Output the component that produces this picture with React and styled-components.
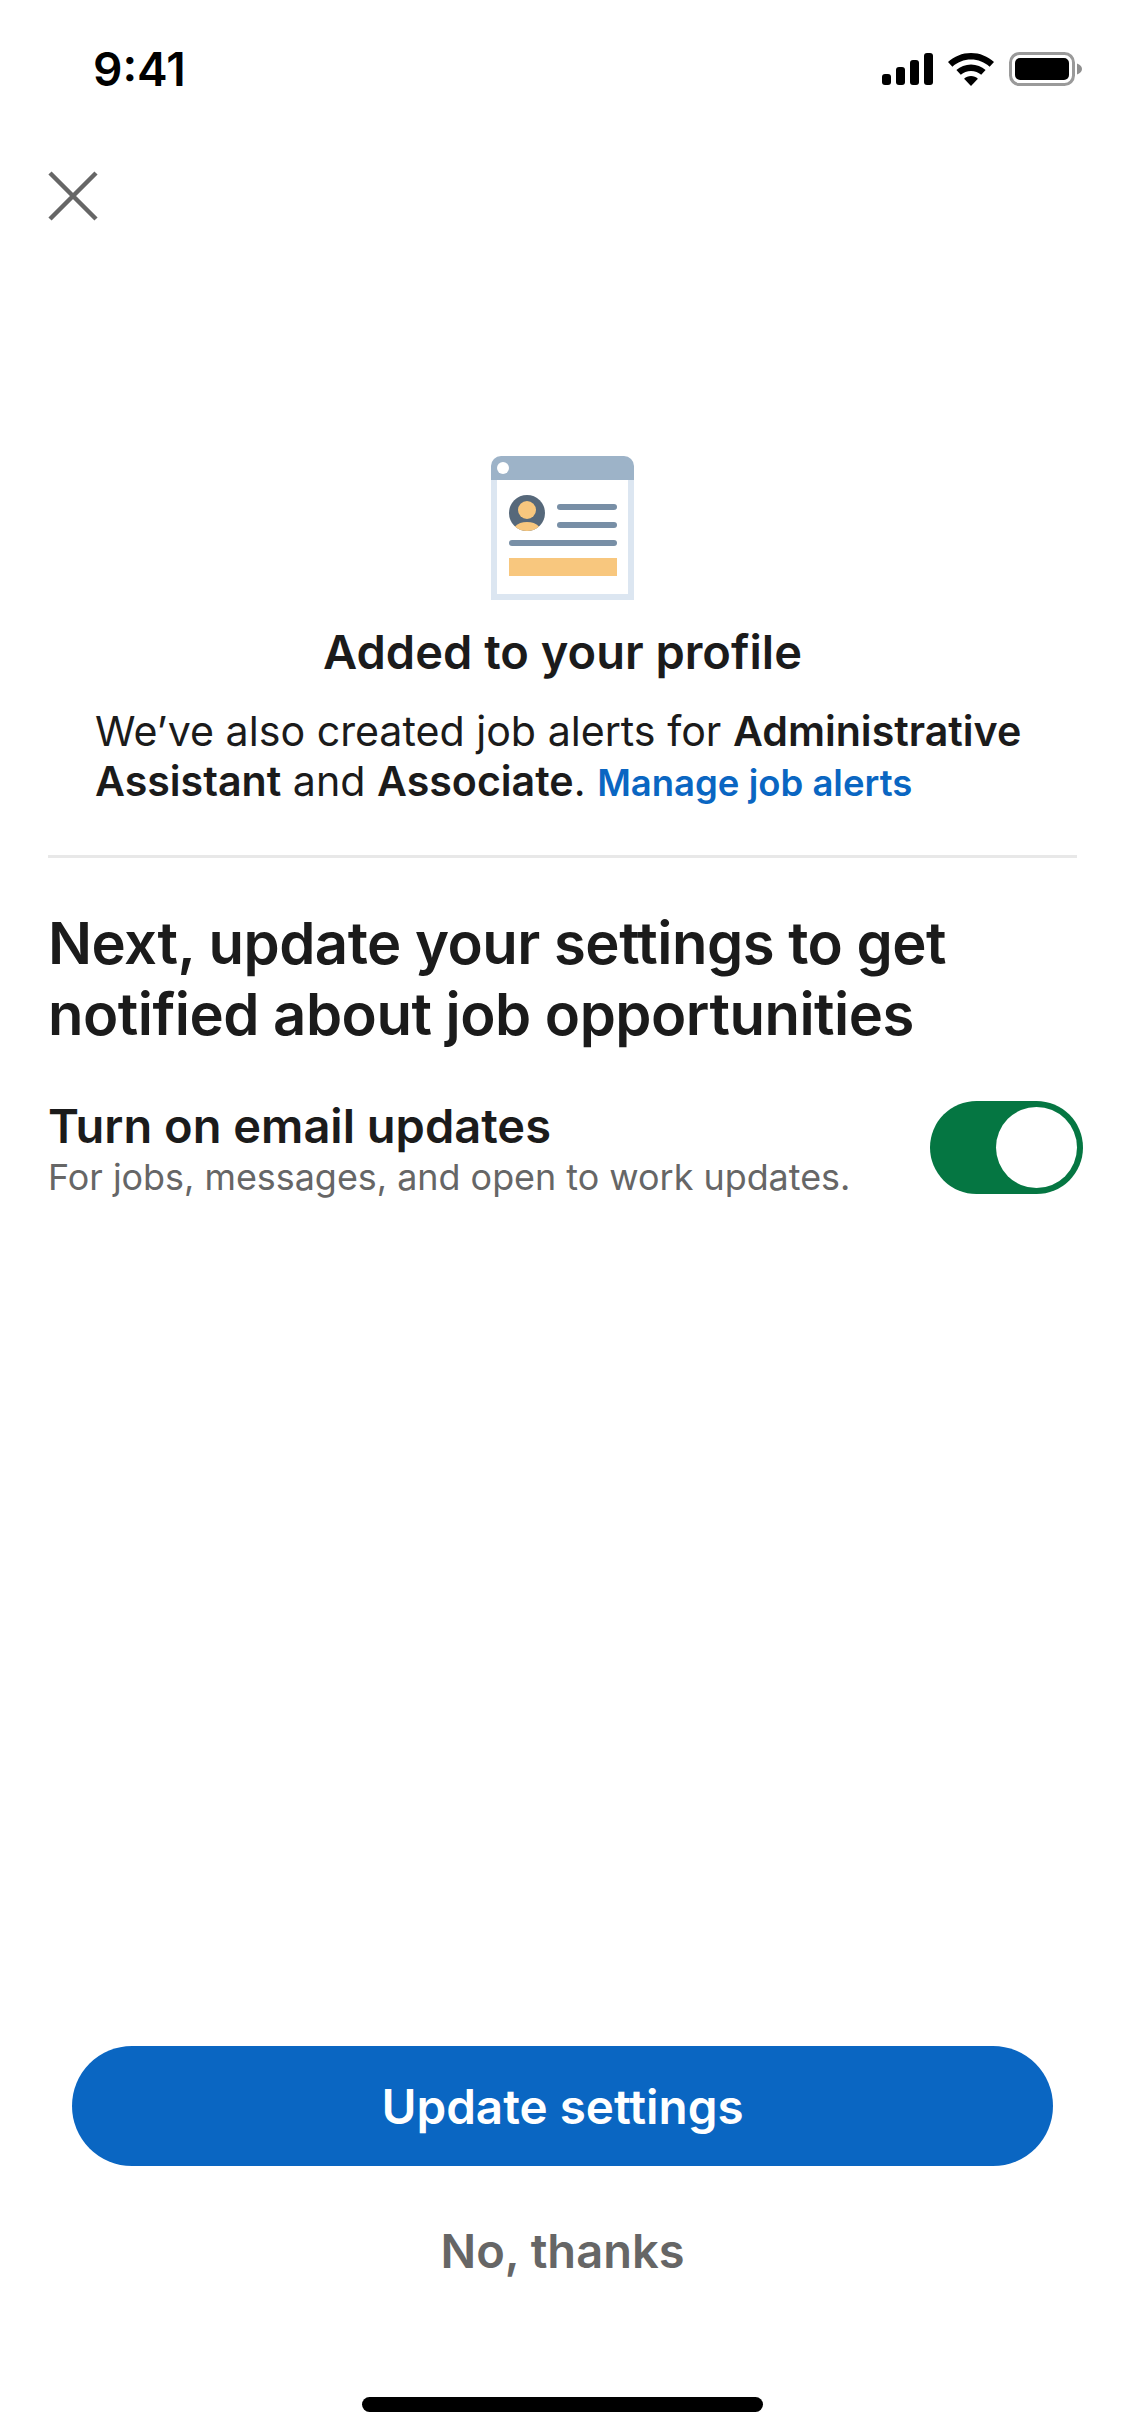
import React from "react";
import styled, {createGlobalStyle} from "styled-components";

const GlobalStyle = createGlobalStyle`
    html, body {
        margin: 0;
        padding: 0;
        background: #fff;
    }
    * {
        box-sizing: border-box;
    }
    body {
        font-family: Inter, "Liberation Sans", sans-serif;
    }
`;

const Page = styled.div`
    width: 1125px;
    height: 2436px;
    display: flex;
    flex-direction: column;
    background: #fff;
    color: #1b1b1b;
    overflow: hidden;
`;

const StatusBar = styled.div`
    height: 52px;
    margin-top: 43px;
    padding: 0 43px 0 93px;
    display: flex;
    align-items: center;
    justify-content: space-between;
`;

const Time = styled.span`
    font-size: 46px;
    font-weight: 600;
    line-height: 52px;
    color: #000;
`;

const StatusIcons = styled.div`
    display: flex;
    align-items: center;
    gap: 15px;
`;

const CloseButton = styled.button`
    width: 50px;
    height: 50px;
    margin: 76px 0 0 48px;
    padding: 0;
    border: 0;
    background: none;
    display: block;
`;

const IllustrationWrap = styled.div`
    margin-top: 235px;
    display: flex;
    justify-content: center;
`;

const ProfileTitle = styled.h2`
    margin: 22px 0 0;
    font-size: 47px;
    line-height: 60px;
    font-weight: 600;
    text-align: center;
`;

const Message = styled.p`
    margin: 24px 48px 0 95px;
    font-size: 41.15px;
    line-height: 50px;
    font-weight: 400;
`;

const Strong = styled.strong`
    font-weight: 600;
`;

const ManageLink = styled.a`
    color: #0a66c2;
    font-size: 36.5px;
    font-weight: 600;
`;

const Divider = styled.hr`
    height: 3px;
    margin: 47px 48px 0;
    border: 0;
    background: #e8e8e8;
`;

const Heading = styled.h1`
    margin: 50px 48px 0;
    font-size: 58px;
    line-height: 71px;
    font-weight: 600;
    letter-spacing: -0.5px;
`;

const SettingRow = styled.div`
    margin: 50px 42px 0 48px;
    display: flex;
    align-items: flex-start;
    justify-content: space-between;
`;

const SettingText = styled.div`
    display: flex;
    flex-direction: column;
`;

const SettingTitle = styled.span`
    font-size: 47px;
    line-height: 52px;
    font-weight: 600;
`;

const SettingHint = styled.span`
    font-size: 35.9px;
    line-height: 50px;
    color: #666;
`;

const Toggle = styled.div`
    width: 153px;
    height: 93px;
    margin-top: 1px;
    padding: 6px;
    border-radius: 47px;
    background: #057642;
    display: flex;
    justify-content: flex-end;
`;

const Knob = styled.div`
    width: 81px;
    height: 81px;
    border-radius: 50%;
    background: #fff;
`;

const Footer = styled.div`
    margin-top: auto;
    display: flex;
    flex-direction: column;
    align-items: center;
`;

const PrimaryButton = styled.button`
    width: 981px;
    height: 120px;
    border: 0;
    border-radius: 60px;
    background: #0a66c2;
    color: #fff;
    font-family: inherit;
    font-size: 47.6px;
    font-weight: 600;
`;

const SecondaryButton = styled.button`
    margin-top: 54px;
    padding: 0;
    height: 60px;
    border: 0;
    background: none;
    color: #666;
    font-family: inherit;
    font-size: 47px;
    font-weight: 600;
`;

const HomeBar = styled.div`
    width: 401px;
    height: 15px;
    margin: 117px 0 24px;
    border-radius: 8px;
    background: #000;
`;

function SignalIcon() {
    return (
        <svg width="51" height="32" viewBox="0 0 51 32">
            <rect x="0" y="21" width="9" height="11" rx="3" fill="#000"/>
            <rect x="14" y="14" width="9" height="18" rx="3" fill="#000"/>
            <rect x="28" y="7" width="9" height="25" rx="3" fill="#000"/>
            <rect x="42" y="0" width="9" height="32" rx="3" fill="#000"/>
        </svg>
    );
}

function WifiIcon() {
    return (
        <svg width="46" height="33" viewBox="0 0 46 33">
            <path d="M23 0C31.8 0 39.8 3.4 46 9L41.6 13.7C36.6 9.2 30.1 6.5 23 6.5S9.4 9.2 4.4 13.7L0 9C6.2 3.4 14.2 0 23 0Z" fill="#000"/>
            <path d="M23 11.5C28.6 11.5 33.7 13.6 37.6 17.1L33.2 21.8C30.5 19.4 26.9 18 23 18S15.5 19.4 12.8 21.8L8.4 17.1C12.3 13.6 17.4 11.5 23 11.5Z" fill="#000"/>
            <path d="M23 23C25.7 23 28.1 24 29.9 25.7L23 33L16.1 25.7C17.9 24 20.3 23 23 23Z" fill="#000"/>
        </svg>
    );
}

function BatteryIcon() {
    return (
        <svg width="73" height="34" viewBox="0 0 73 34">
            <rect x="1.5" y="1.5" width="63" height="31" rx="9" fill="none" stroke="#9a9a9a" strokeWidth="3"/>
            <rect x="6" y="6" width="54" height="22" rx="5" fill="#000"/>
            <path d="M68 11.5C71 12.5 73 14.5 73 17S71 21.5 68 22.5Z" fill="#8f8f8f"/>
        </svg>
    );
}

function ProfileIllustration() {
    return (
        <svg width="143" height="144" viewBox="0 0 143 144">
            <rect x="0" y="10" width="143" height="134" fill="#dce6f1"/>
            <path d="M0 24V10A10 10 0 0 1 10 0H133A10 10 0 0 1 143 10V24Z" fill="#9db3c8"/>
            <circle cx="12" cy="12" r="6" fill="#fff"/>
            <rect x="6" y="24" width="131" height="114" fill="#fff"/>
            <circle cx="36" cy="57" r="18" fill="#56687a"/>
            <circle cx="36" cy="54" r="9" fill="#f8c77e"/>
            <path d="M24 70.4C27 67.3 31 66 36 66S45 67.3 48 70.4C44.8 73.3 40.6 75 36 75S27.2 73.3 24 70.4Z" fill="#f8c77e"/>
            <rect x="66" y="48" width="60" height="6" rx="3" fill="#788fa6"/>
            <rect x="66" y="66" width="60" height="6" rx="3" fill="#788fa6"/>
            <rect x="18" y="84" width="108" height="6" rx="3" fill="#788fa6"/>
            <rect x="18" y="102" width="108" height="18" fill="#f8c77e"/>
        </svg>
    );
}

function CloseIcon() {
    return (
        <svg width="50" height="50" viewBox="0 0 50 50">
            <path d="M2 2L48 48M48 2L2 48" stroke="#666" strokeWidth="4.5" fill="none"/>
        </svg>
    );
}

export default function App() {
    return (
        <Page>
            <GlobalStyle/>
            <StatusBar>
                <Time>9:41</Time>
                <StatusIcons>
                    <SignalIcon/>
                    <WifiIcon/>
                    <BatteryIcon/>
                </StatusIcons>
            </StatusBar>
            <CloseButton aria-label="Close">
                <CloseIcon/>
            </CloseButton>
            <IllustrationWrap>
                <ProfileIllustration/>
            </IllustrationWrap>
            <ProfileTitle>Added to your profile</ProfileTitle>
            <Message>
                We’ve also created job alerts for <Strong>Administrative Assistant</Strong> and <Strong>Associate</Strong>. <ManageLink>Manage job alerts</ManageLink>
            </Message>
            <Divider/>
            <Heading>Next, update your settings to get notified about job opportunities</Heading>
            <SettingRow>
                <SettingText>
                    <SettingTitle>Turn on email updates</SettingTitle>
                    <SettingHint>For jobs, messages, and open to work updates.</SettingHint>
                </SettingText>
                <Toggle>
                    <Knob/>
                </Toggle>
            </SettingRow>
            <Footer>
                <PrimaryButton>Update settings</PrimaryButton>
                <SecondaryButton>No, thanks</SecondaryButton>
                <HomeBar/>
            </Footer>
        </Page>
    );
}
